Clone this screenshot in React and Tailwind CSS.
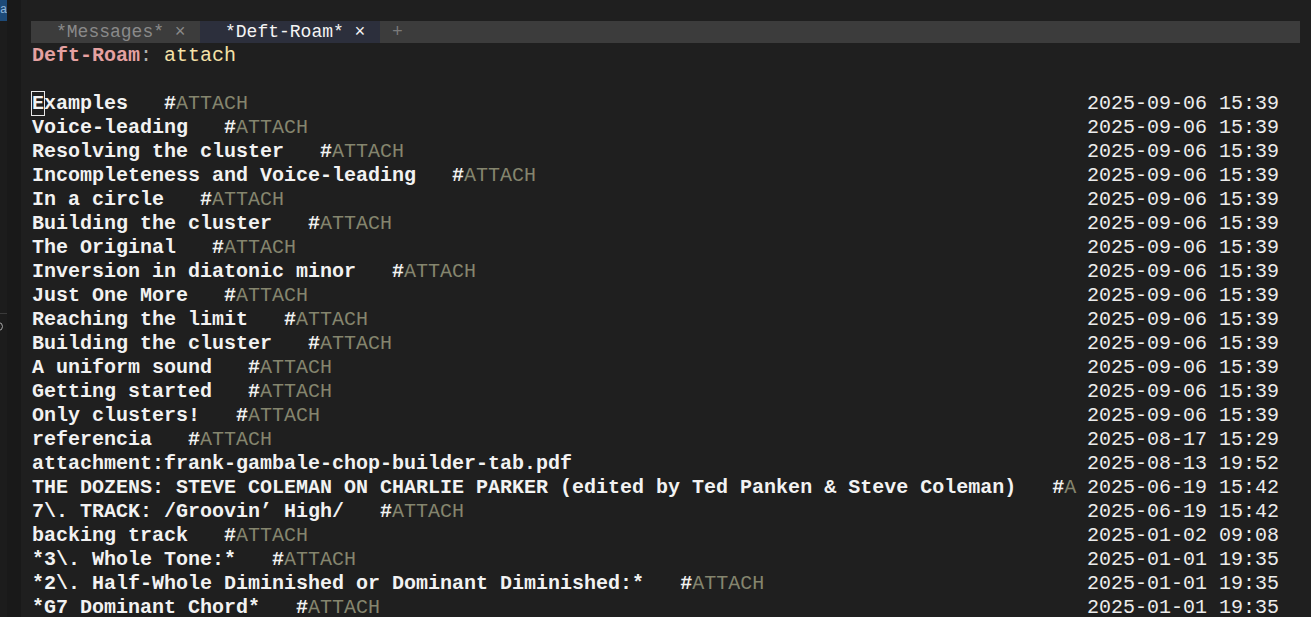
import React from "react";

const mono = { fontFamily: '"Liberation Mono", "DejaVu Sans Mono", monospace' };

const rows = [
  ["Examples", true, "2025-09-06 15:39"],
  ["Voice-leading", true, "2025-09-06 15:39"],
  ["Resolving the cluster", true, "2025-09-06 15:39"],
  ["Incompleteness and Voice-leading", true, "2025-09-06 15:39"],
  ["In a circle", true, "2025-09-06 15:39"],
  ["Building the cluster", true, "2025-09-06 15:39"],
  ["The Original", true, "2025-09-06 15:39"],
  ["Inversion in diatonic minor", true, "2025-09-06 15:39"],
  ["Just One More", true, "2025-09-06 15:39"],
  ["Reaching the limit", true, "2025-09-06 15:39"],
  ["Building the cluster", true, "2025-09-06 15:39"],
  ["A uniform sound", true, "2025-09-06 15:39"],
  ["Getting started", true, "2025-09-06 15:39"],
  ["Only clusters!", true, "2025-09-06 15:39"],
  ["referencia", true, "2025-08-17 15:29"],
  ["attachment:frank-gambale-chop-builder-tab.pdf", false, "2025-08-13 19:52"],
  ["THE DOZENS: STEVE COLEMAN ON CHARLIE PARKER (edited by Ted Panken & Steve Coleman)", true, "2025-06-19 15:42"],
  ["7\\. TRACK: /Groovin’ High/", true, "2025-06-19 15:42"],
  ["backing track", true, "2025-01-02 09:08"],
  ["*3\\. Whole Tone:*", true, "2025-01-01 19:35"],
  ["*2\\. Half-Whole Diminished or Dominant Diminished:*", true, "2025-01-01 19:35"],
  ["*G7 Dominant Chord*", true, "2025-01-01 19:35"],
];

// the title column is 87 characters wide, longer lines are cut
const COLS = 87;

const Row = ({ title, tag, date, cursor }) => {
  const pad = title.length + 3;
  const tagText = tag ? "#ATTACH".slice(0, Math.max(0, COLS - pad)) : "";
  return (
    <div className="flex h-[24px] items-center text-[20px] leading-[24px]">
      <div className="w-[1044px] shrink-0 whitespace-pre">
        <span className="font-bold text-[#f2f2f2]">
          {cursor ? (
            <>
              <span className="outline outline-1 outline-[#e8e8e8] outline-offset-0">{title[0]}</span>
              {title.slice(1)}
            </>
          ) : (
            title
          )}
        </span>
        {tag && (
          <>
            <span>{"   "}</span>
            <span className="font-bold text-[#f2f2f2]">{tagText.slice(0, 1)}</span>
            <span className="text-[#85856e]">{tagText.slice(1)}</span>
          </>
        )}
      </div>
      <div className="ml-[11px] whitespace-pre text-[#ececec]">{date}</div>
    </div>
  );
};

export default function App() {
  return (
    <div className="flex h-[617px] w-[1311px] overflow-hidden bg-[#1f1f1f]" style={mono}>
      {/* left side strips */}
      <div className="flex w-[7px] shrink-0 flex-col bg-[#1c1c1c]">
        <div className="h-[21px] overflow-hidden bg-[#1d4a78] text-[12px] leading-[21px] text-[#8fb4d8]">
          <span className="block">a</span>
        </div>
        <div className="mt-[292px] h-px bg-[#3a3a3a]" />
        <div className="mt-[8px] -ml-[6px] h-[9px] w-[9px] rounded-full border border-[#aaaaaa]" />
      </div>
      <div className="w-[14px] shrink-0 bg-[#191919]" />

      <div className="flex min-w-0 flex-1 flex-col pl-[10px] pt-[21px]">
        {/* tab bar */}
        <div className="flex h-[22px] w-[1269px] items-center bg-[#3c3c3c] text-[18px] leading-[22px]">
          <div className="flex h-full w-[169px] items-center whitespace-pre pl-[25px] text-[#8a8a8a]">
            *Messages* ×
          </div>
          <div className="flex h-full w-[180px] items-center whitespace-pre bg-[#2c2f3c] pl-[25px] text-[#f4f4f4]">
            *Deft-Roam* ×
          </div>
          <div className="pl-[12px] text-[#7a7a7a]">+</div>
        </div>

        <div className="mt-[1px] pl-[1px]">
          {/* header */}
          <div className="h-[24px] whitespace-pre text-[20px] leading-[24px]">
            <span className="font-bold text-[#e5a1a1]">Deft-Roam</span>
            <span className="text-[#b0b0b0]">: </span>
            <span className="text-[#f5e2a8]">attach</span>
          </div>
          <div className="h-[24px]" />

          {rows.map(([title, tag, date], i) => (
            <Row key={i} title={title} tag={tag} date={date} cursor={i === 0} />
          ))}
        </div>
      </div>
    </div>
  );
}
